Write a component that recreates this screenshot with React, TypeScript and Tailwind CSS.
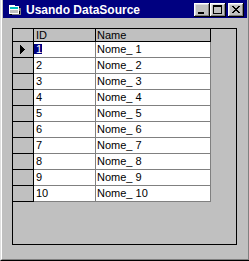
import React from 'react';

const rows = Array.from({ length: 10 }, (_, i) => ({ id: i + 1, name: `Nome_ ${i + 1}` }));

function CaptionButton({ children }: { children: React.ReactNode }) {
  return (
    <div className="relative w-[16px] h-[14px] bg-[#c0c0c0] shadow-[inset_-1px_-1px_0_#000,inset_1px_1px_0_#fff,inset_-2px_-2px_0_#808080,inset_2px_2px_0_#dfdfdf]">
      {children}
    </div>
  );
}

function TitleIcon() {
  return (
    <svg width="13" height="12" viewBox="0 0 13 12" className="block" shapeRendering="crispEdges">
      <path d="M1 1h5l1 1h4v8H1z" fill="#000" />
      <path d="M0 0h5l1 1h4v8H0z" fill="#fff" />
      <path d="M1 2h8v2H1z" fill="#00c0c0" />
      <path d="M1 5h8v3H1z" fill="#c0c0c0" />
      <path d="M10 3h2v7h-9v-1h8z" fill="#808080" />
    </svg>
  );
}

export default function App() {
  return (
    <div className="w-[249px] h-[261px] flex flex-col border-l border-l-[#dfdfdf] border-b border-b-black bg-[#c0c0c0] font-['Liberation_Sans',Arial,sans-serif]">
      <div className="flex-1 flex flex-col border-l border-l-white border-r border-r-[#808080] border-b border-b-[#808080] px-[1px]">
        {/* title bar */}
        <div className="h-[18px] bg-[#000080] flex items-start pt-[3px] pr-[3px]">
          <div className="ml-[6px] mt-[2px]">
            <TitleIcon />
          </div>
          <span className="ml-[4px] text-white font-bold text-[12px] leading-[14px] tracking-[0px]">
            Usando DataSource
          </span>
          <div className="ml-auto flex">
            <CaptionButton>
              <div className="absolute left-[4px] top-[9px] w-[6px] h-[2px] bg-black" />
            </CaptionButton>
            <CaptionButton>
              <div className="absolute left-[3px] top-[2px] w-[9px] h-[9px] border border-black border-t-2" />
            </CaptionButton>
            <div className="w-[2px]" />
            <CaptionButton>
              <svg width="16" height="14" viewBox="0 0 16 14" className="absolute left-0 top-0" shapeRendering="crispEdges">
                <path d="M4 3h2v1h1v1h2v-1h1v-1h2v1h-1v1h-1v1h-1v1h1v1h1v1h1v1h-2v-1h-1v-1h-2v1h-1v1h-2v-1h1v-1h1v-1h1v-1h-1v-1h-1v-1h-1z" fill="#000" />
              </svg>
            </CaptionButton>
          </div>
        </div>

        {/* grid */}
        <div className="ml-[9px] mt-[10px] w-[225px] h-[217px] border border-black bg-[#c0c0c0] text-[11px] text-black">
          <div className="flex h-[13px] leading-[13px]">
            <div className="w-[21px] border-r border-b border-black" />
            <div className="w-[62px] pl-[2px] border-r border-b border-black">ID</div>
            <div className="w-[115px] pl-[1px] border-r border-b border-black">Name</div>
          </div>
          {rows.map((row) => (
            <div key={row.id} className="flex h-[16px] leading-[15px]">
              <div className="w-[21px] border-r border-b border-black flex items-center justify-center">
                {row.id === 1 && (
                  <svg width="6" height="9" viewBox="0 0 6 9" shapeRendering="crispEdges">
                    <path d="M0 0L5 4.5L0 9z" fill="#000" />
                  </svg>
                )}
              </div>
              <div className="w-[62px] bg-white border-r border-b border-[#808080]">
                {row.id === 1 ? (
                  <span className="inline-block mt-[2px] h-[10px] leading-[10px] bg-[#000080] text-white pl-[2px]">
                    {row.id}
                  </span>
                ) : (
                  <span className="pl-[2px]">{row.id}</span>
                )}
              </div>
              <div className="w-[115px] bg-white pl-[1px] border-r border-b border-[#808080]">{row.name}</div>
            </div>
          ))}
        </div>
      </div>
    </div>
  );
}
